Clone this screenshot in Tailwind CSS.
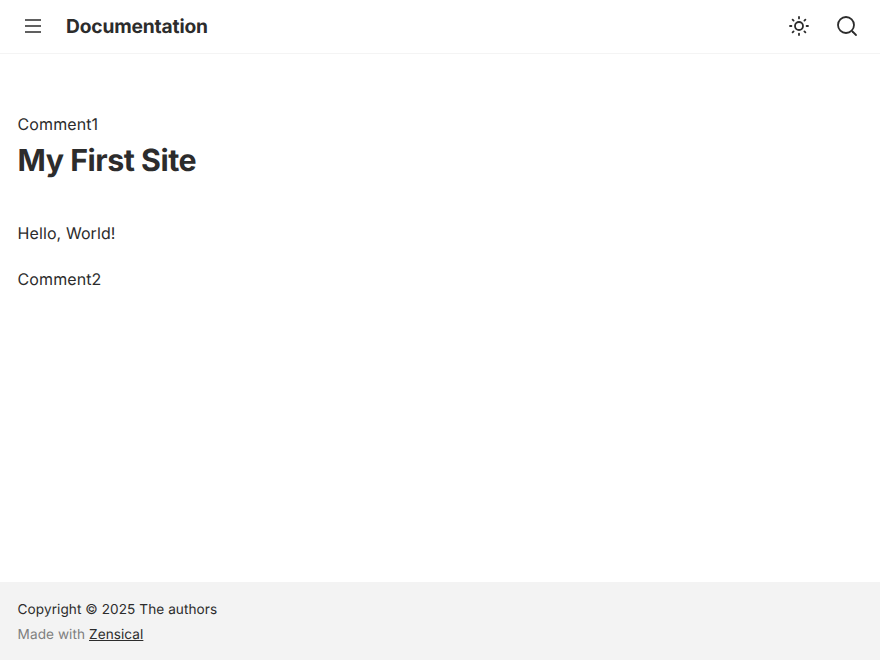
<!DOCTYPE html>
<html lang="en">
<head>
  <meta charset="UTF-8">
  <meta name="viewport" content="width=device-width, initial-scale=1.0">
  <title>Documentation</title>
  <script src="https://cdn.jsdelivr.net/npm/@tailwindcss/browser@4"></script>
</head>
<body class="bg-white text-[#2c2c2c] font-['Inter',sans-serif] antialiased [text-rendering:geometricPrecision] h-[660px] flex flex-col overflow-hidden">
  <header class="h-[54px] shrink-0 flex items-center border-b border-[#f4f4f4] px-[21px] pb-[1px]">
    <svg class="w-6 h-6" viewBox="0 0 24 24" fill="none" stroke="#2c2c2c"><path d="M4 6h16M4 12h16M4 18h16" stroke-width="1.6"/></svg>
    <span class="ml-[21px] text-[19.2px] font-bold tracking-[-0.16px]">Documentation</span>
    <div class="ml-auto flex items-center gap-6">
      <svg class="w-6 h-6" viewBox="0 0 24 24" fill="none" stroke="#2c2c2c" stroke-width="1.8" stroke-linecap="round"><circle cx="12" cy="12" r="4"/><path d="M12 3v1.4M12 19.6V21M3 12h1.4M19.6 12H21M5.6 5.6l1 1M17.4 17.4l1 1M5.6 18.4l1-1M17.4 6.6l1-1"/></svg>
      <svg class="w-6 h-6" viewBox="0 0 24 24" fill="none" stroke="#2c2c2c" stroke-width="1.8" stroke-linecap="round"><circle cx="11" cy="11" r="8"/><path d="m21 21-3.5-3.5"/></svg>
    </div>
  </header>
  <main class="flex-1 px-[17.6px] pt-[58px] text-[16px] leading-[24px] tracking-[0.09px]">
    <p>Comment1</p>
    <h1 class="mt-[5px] text-[30.4px] leading-[40px] font-bold tracking-[-0.5px]">My First Site</h1>
    <p class="mt-[40px]">Hello, World!</p>
    <p class="mt-[22px]">Comment2</p>
  </main>
  <footer class="h-[78px] shrink-0 bg-[#f3f3f3] px-[17.6px] pt-[16px] text-[13.6px] leading-[25px] tracking-[0.07px]">
    <p>Copyright © 2025 The authors</p>
    <p class="text-[#7f7f7f]">Made with <a href="#" class="text-[#2c2c2c] underline">Zensical</a></p>
  </footer>
</body>
</html>
